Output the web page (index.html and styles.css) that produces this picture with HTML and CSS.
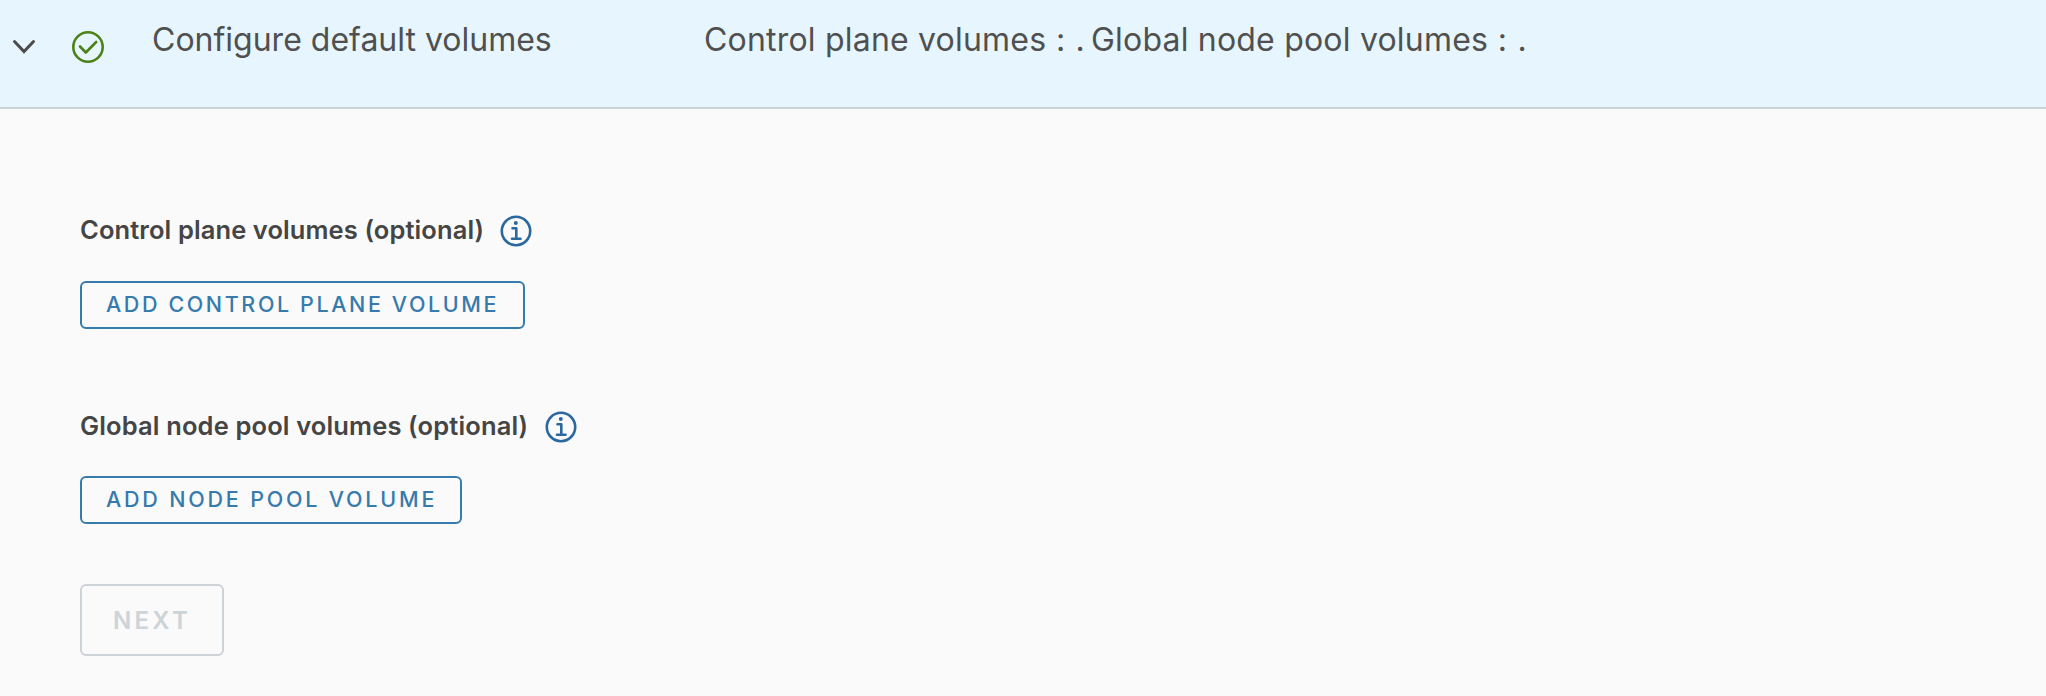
FILE: index.html
```html
<!DOCTYPE html>
<html lang="en">
<head>
<meta charset="utf-8">
<title>Configure default volumes</title>
<link rel="stylesheet" href="styles.css">
</head>
<body>
<header class="step-header">
  <svg class="chevron" width="24" height="16" viewBox="0 0 24 16"><path d="M2.500 2.500 12 12.500 21.500 2.500"/></svg>
  <svg class="status" width="34" height="34" viewBox="0 0 34 34"><circle cx="17" cy="17" r="14.700"/><path d="M9 16.500 14.800 22.500 25.200 12"/></svg>
  <h1 class="title">Configure default volumes</h1>
  <p class="summary"><span class="summary-first">Control plane volumes<span class="mark"> : .</span></span><span class="summary-second">Global node pool volumes<span class="mark"> : .</span></span></p>
</header>
<main class="content">
  <section class="group">
    <div class="label-row">
      <h2 class="label label-control">Control plane volumes (optional)</h2>
      <svg class="info" width="32" height="32" viewBox="0 0 32 32"><circle cx="16" cy="16" r="14.200"/><circle class="dot" cx="15.800" cy="8" r="2"/><path d="M12.500 13.300H16.300V23.700M12 23.700H20.500"/></svg>
    </div>
    <button class="button button-control">ADD CONTROL PLANE VOLUME</button>
  </section>
  <section class="group group-pool">
    <div class="label-row">
      <h2 class="label label-pool">Global node pool volumes (optional)</h2>
      <svg class="info" width="32" height="32" viewBox="0 0 32 32"><circle cx="16" cy="16" r="14.200"/><circle class="dot" cx="15.800" cy="8" r="2"/><path d="M12.500 13.300H16.300V23.700M12 23.700H20.500"/></svg>
    </div>
    <button class="button button-pool">ADD NODE POOL VOLUME</button>
  </section>
  <button class="next" disabled>NEXT</button>
</main>
</body>
</html>
```
FILE: styles.css
```css
* { box-sizing: border-box; }
body {
  margin: 0;
  min-height: 696px;
  background: #fafafa;
  color: #454545;
  font-family: Inter, "Liberation Sans", sans-serif;
}
svg { display: block; flex: none; fill: none; stroke-linecap: round; stroke-linejoin: round; }
.step-header {
  display: flex;
  align-items: flex-start;
  height: 109px;
  background: #e7f6fe;
  border-bottom: 2px solid #c8d3da;
}
.chevron { margin: 39px 0 0 12px; stroke: #4b4b4b; stroke-width: 3; stroke-linejoin: miter; }
.status { margin: 30px 0 0 35px; stroke: #4c8218; stroke-width: 2.6; }
.title, .summary {
  margin: 20px 0 0;
  font-size: 32px;
  line-height: 40px;
  font-weight: 400;
  white-space: nowrap;
  color: #505050;
}
.title { width: 552px; margin-left: 47px; }
.summary { display: flex; letter-spacing: 0.2px; }
.summary-first { width: 387px; }
.mark { letter-spacing: 0.7px; }
.content { padding: 105px 80px 0; }
.group { display: flex; flex-direction: column; align-items: flex-start; height: 195px; }
.label-row { display: flex; align-items: center; height: 34px; margin-bottom: 33px; }
.group-pool .label-row { margin-top: 1px; margin-bottom: 32px; }
.label { margin: 0; padding-bottom: 2px; font-size: 25.5px; line-height: 32px; font-weight: 600; letter-spacing: 0.1px; white-space: nowrap; }
.label-control { width: 420px; }
.label-pool { width: 465px; letter-spacing: 0.14px; }
.info { stroke: #2a689f; stroke-width: 2.6; }
.dot { fill: #2a689f; stroke: none; }
.button, .next {
  display: flex;
  align-items: center;
  justify-content: flex-start;
  padding: 0 0 2px 24px;
  border: 2px solid #367bac;
  border-radius: 6px;
  background: transparent;
  color: #367bac;
  font-family: inherit;
  font-size: 21.5px;
  font-weight: 500;
  letter-spacing: 2.6px;
  white-space: nowrap;
}
.button { height: 48px; }
.button-control { width: 445px; }
.button-pool { width: 382px; letter-spacing: 2.8px; }
.next {
  width: 144px;
  height: 72px;
  margin-top: -20px;
  padding: 1px 0 0 31px;
  border-color: #ccd4d8;
  color: #ccd4d8;
  font-size: 24px;
  font-weight: 600;
  letter-spacing: 3.3px;
}
```
